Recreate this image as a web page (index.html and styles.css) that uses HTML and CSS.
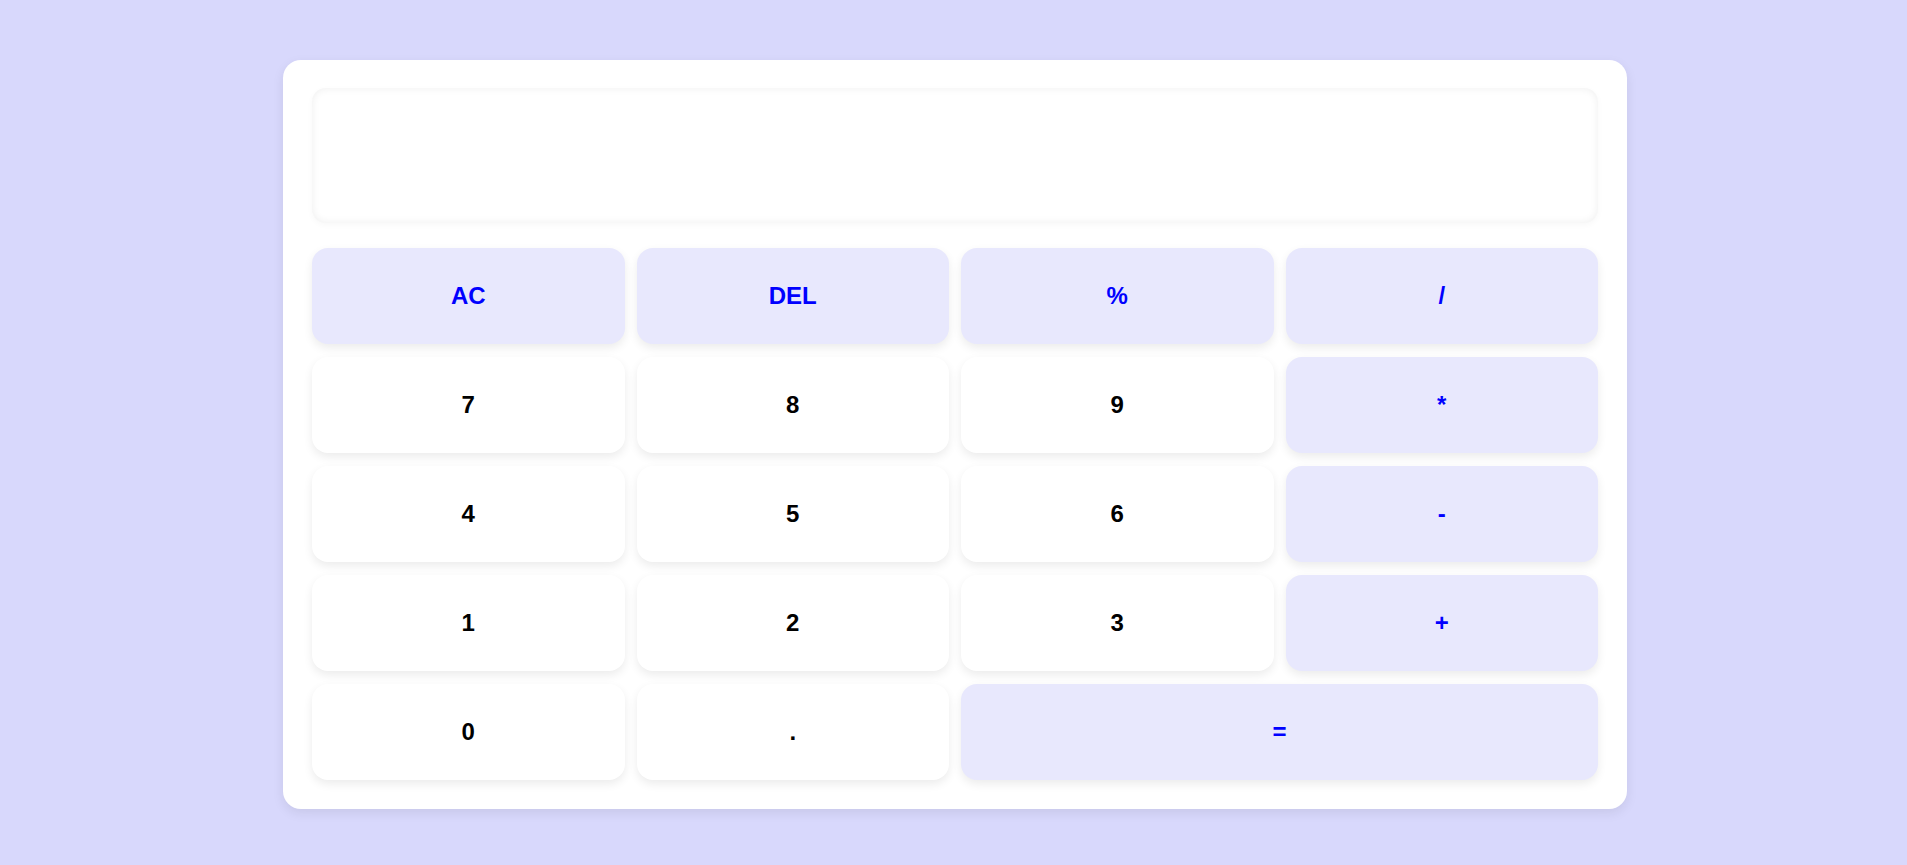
FILE: index.html
```html
<!DOCTYPE html>
<html lang="en">
<head>
<meta charset="utf-8">
<title>Calculator</title>
<link rel="stylesheet" href="styles.css">
</head>
<body>
<div class="calculator">
  <div class="display"></div>
  <div class="keys">
    <button class="key op">AC</button>
    <button class="key op">DEL</button>
    <button class="key op">%</button>
    <button class="key op">/</button>
    <button class="key">7</button>
    <button class="key">8</button>
    <button class="key">9</button>
    <button class="key op">*</button>
    <button class="key">4</button>
    <button class="key">5</button>
    <button class="key">6</button>
    <button class="key op">-</button>
    <button class="key">1</button>
    <button class="key">2</button>
    <button class="key">3</button>
    <button class="key op">+</button>
    <button class="key">0</button>
    <button class="key">.</button>
    <button class="key op wide">=</button>
  </div>
</div>
</body>
</html>
```

FILE: styles.css
```css
html, body {
  margin: 0;
  padding: 0;
}
body {
  background: #d8d8fc;
  font-family: "Liberation Sans", Arial, sans-serif;
  display: flex;
  justify-content: center;
  align-items: flex-start;
  height: 865px;
  box-sizing: border-box;
  padding-top: 60px;
  padding-left: 3px;
}
.calculator {
  width: 1344px;
  box-sizing: border-box;
  padding: 28px 29px 29px 29px;
  background: #ffffff;
  border-radius: 18px;
  box-shadow: 0 4px 12px rgba(0, 0, 0, 0.08);
}
.display {
  height: 135px;
  border-radius: 14px;
  background: #ffffff;
  box-shadow: inset 0 0 8px rgba(0, 0, 0, 0.07), 0 2px 6px rgba(0, 0, 0, 0.03);
  margin-bottom: 25px;
}
.keys {
  display: grid;
  grid-template-columns: repeat(4, 1fr);
  grid-auto-rows: 96px;
  column-gap: 12px;
  row-gap: 13px;
}
.key {
  border: none;
  border-radius: 16px;
  background: #ffffff;
  color: #000000;
  font-family: "Liberation Sans", Arial, sans-serif;
  font-size: 24px;
  font-weight: bold;
  box-shadow: 0 4px 10px rgba(0, 0, 0, 0.08);
  padding: 0;
  cursor: pointer;
}
.key.op {
  background: #e8e8fd;
  color: #0000ff;
}
.key.wide {
  grid-column: span 2;
}
```
